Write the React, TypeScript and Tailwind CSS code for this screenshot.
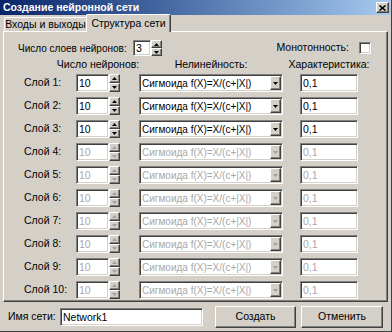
import React from 'react'

const edit =
  'bg-white border border-t-[#808080] border-l-[#808080] border-r-white border-b-white shadow-[inset_1px_1px_0_#404040,inset_-1px_-1px_0_#d4d0c8]'
const raised =
  'bg-[#d4d0c8] border border-t-white border-l-white border-r-[#404040] border-b-[#404040] shadow-[inset_-1px_-1px_0_#808080]'

function Arrow({ up, color }: { up?: boolean; color: string }) {
  return (
    <svg width="5" height="3" viewBox="0 0 5 3">
      <polygon points={up ? '2.5,0 5,3 0,3' : '0,0 5,0 2.5,3'} fill={color} />
    </svg>
  )
}

function Spin({ h, enabled }: { h: number; enabled: boolean }) {
  const c = enabled ? '#000' : '#a0a0a0'
  return (
    <div className="flex flex-col w-[11px]" style={{ height: h }}>
      <div className={`${raised} flex-1 flex items-center justify-center`}>
        <Arrow up color={c} />
      </div>
      <div className={`${raised} flex-1 flex items-center justify-center`}>
        <Arrow color={c} />
      </div>
    </div>
  )
}

function Row({ n }: { n: number }) {
  const enabled = n <= 3
  const txt = enabled ? 'text-black' : 'text-[#a8a8a8]'
  return (
    <div className="flex items-center h-[18px]">
      <div className="w-[52px]">Слой {n}:</div>
      <div className={`${edit} w-[33px] h-[18px] pl-[2px] leading-[16px] ${txt}`}>10</div>
      <Spin h={18} enabled={enabled} />
      <div className={`${edit} ml-[19px] w-[144px] h-[18px] flex items-center pl-[2px] pr-[1px] ${txt}`}>
        <span className="flex-1 overflow-hidden text-[10px]">Сигмоида f(X)=X/(c+|X|)</span>
        <div className={`${raised} w-[11px] h-[14px] flex items-center justify-center`}>
          <Arrow color={enabled ? '#000' : '#a0a0a0'} />
        </div>
      </div>
      <div className={`${edit} ml-[17px] w-[58px] h-[18px] pl-[2px] leading-[16px] ${txt}`}>0,1</div>
    </div>
  )
}

export default function App() {
  return (
    <div
      className="w-[392px] h-[332px] bg-[#d4d0c8] text-[10.5px] text-black whitespace-nowrap flex flex-col overflow-hidden border-r border-b border-r-[#404040] border-b-[#404040]"
      style={{ fontFamily: '"Liberation Sans", Arial, sans-serif' }}
    >
      {/* title bar */}
      <div className="h-[15px] bg-gradient-to-r from-[#0a246a] to-[#a6caf0] flex items-center pl-[3px] pr-[2px]">
        <span className="text-white font-bold flex-1 leading-none">Создание нейронной сети</span>
        <div className={`${raised} w-[13px] h-[11px] flex items-center justify-center`}>
          <svg width="7" height="6" viewBox="0 0 7 6">
            <path d="M0.5 0.5 L6.5 5.5 M6.5 0.5 L0.5 5.5" stroke="#000" strokeWidth="1.6" />
          </svg>
        </div>
      </div>

      <div className="px-[3px] flex flex-col">
        {/* tabs */}
        <div className="h-[16px] flex items-end relative z-10">
          <div className="h-[14px] w-[82px] ml-[1px] border-t border-l border-t-white border-l-white flex items-center justify-center rounded-tl-[2px]">
            Входы и выходы
          </div>
          <div className="h-[18px] -mb-[1px] w-[85px] bg-[#d4d0c8] border-t border-l border-r border-t-white border-l-white border-r-[#404040] shadow-[inset_-1px_0_0_#808080] flex items-center justify-center rounded-t-[2px]">
            Структура сети
          </div>
        </div>

        {/* panel */}
        <div className="h-[271px] border border-t-white border-l-white border-r-[#404040] border-b-[#404040] shadow-[inset_-1px_-1px_0_#808080] flex flex-col">
          <div className="flex items-center h-[16px] mt-[8px] pl-[14px] pr-[16px]">
            <div className="w-[115px] text-[10px]">Число слоев нейронов:</div>
            <div className={`${edit} w-[18px] h-[16px] pl-[2px] leading-[14px]`}>3</div>
            <Spin h={16} enabled />
            <div className="ml-auto mr-[10px]">Монотонность:</div>
            <div className={`${edit} w-[12px] h-[12px]`} />
          </div>

          <div className="flex h-[12px] mt-[2px] pl-[72px] leading-[12px]">
            <div className="w-[44px] flex justify-center">Число нейронов:</div>
            <div className="ml-[19px] w-[144px] flex justify-center">Нелинейность:</div>
            <div className="ml-[17px] w-[58px] flex justify-center">Характеристика:</div>
          </div>

          <div className="flex flex-col gap-[5px] mt-[4px] pl-[20px]">
            {[1, 2, 3, 4, 5, 6, 7, 8, 9, 10].map((n) => (
              <Row key={n} n={n} />
            ))}
          </div>
        </div>

        {/* bottom */}
        <div className="flex items-center h-[29px] pl-[5px]">
          <div className="w-[52px]">Имя сети:</div>
          <div className={`${edit} w-[143px] h-[18px] pl-[2px] leading-[16px]`}>Network1</div>
          <div className={`${raised} ml-[12px] w-[81px] h-[22px] flex items-center justify-center`}>Создать</div>
          <div className={`${raised} ml-[5px] w-[82px] h-[22px] flex items-center justify-center`}>Отменить</div>
        </div>
      </div>
    </div>
  )
}
